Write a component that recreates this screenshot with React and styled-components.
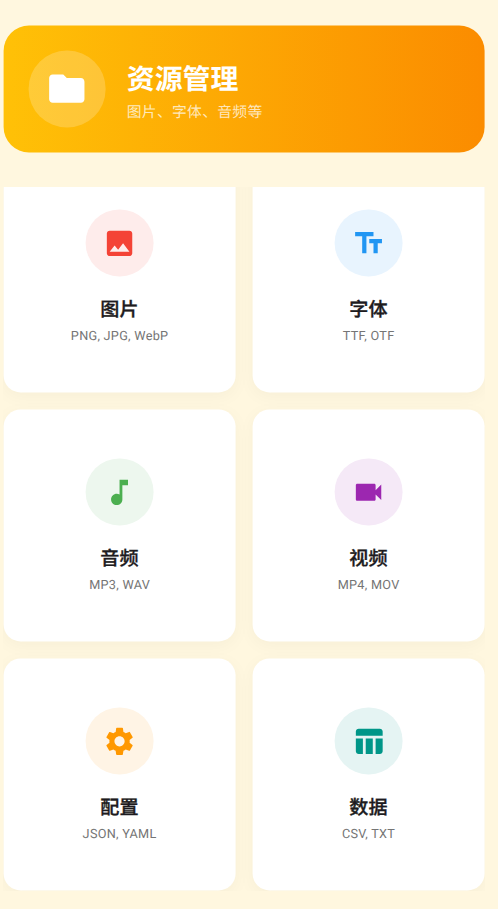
import React from 'react';
import styled, { createGlobalStyle } from 'styled-components';
import { MdFolder, MdImage, MdTextFields, MdMusicNote, MdVideocam, MdSettings, MdTableChart } from 'react-icons/md';

const GlobalStyle = createGlobalStyle`
  *, *::before, *::after { box-sizing: border-box; }
  body {
    margin: 0;
    background: #fff7df;
    font-family: Roboto, "Noto Sans CJK SC", sans-serif;
    text-rendering: geometricPrecision;
  }
`;

const Page = styled.main`
  height: 909px;
  padding: 26px 13px 0 4px;
  overflow: hidden;
  background: #fff7df;
`;

const Header = styled.header`
  display: flex;
  align-items: center;
  gap: 21.6px;
  height: 127px;
  padding: 0 25.4px;
  border-radius: 25.4px;
  background: linear-gradient(90deg, #ffc107, #fb8c00);
  transform: translate(-0.4px, -0.5px);
`;

const HeaderIcon = styled.div`
  display: grid;
  place-items: center;
  width: 76.2px;
  height: 76.2px;
  border-radius: 50%;
  background: rgba(255, 255, 255, 0.2);
  color: #fff;
  font-size: 42.4px;
  svg { display: block; }
`;

const HeaderText = styled.div`
  display: flex;
  flex-direction: column;
  gap: 5px;
  padding-top: 6px;
`;

const Title = styled.h1`
  margin: 0;
  font-size: 27.9px;
  line-height: 34px;
  font-weight: 700;
  color: #fff;
`;

const Subtitle = styled.p`
  margin: 0;
  font-size: 14.8px;
  line-height: 21px;
  letter-spacing: 0.28px;
  color: rgba(255, 255, 255, 0.74);
`;

const Viewport = styled.section`
  display: flex;
  flex-direction: column;
  justify-content: flex-end;
  height: 704px;
  margin: 34px 0 0 -1px;
  padding-left: 1px;
  overflow: hidden;
`;

const Grid = styled.div`
  flex: none;
  display: grid;
  grid-template-columns: 1fr 1fr;
  grid-auto-rows: 232px;
  gap: 17px;
  transform: translate(-0.4px, -0.6px);
`;

const Card = styled.article`
  display: flex;
  flex-direction: column;
  align-items: center;
  padding-top: 48.6px;
  border-radius: 17px;
  background: #fff;
  box-shadow: 0 4px 17px rgba(0, 0, 0, 0.035);
`;

const CardIcon = styled.div`
  display: grid;
  place-items: center;
  width: 67.8px;
  height: 67.8px;
  border-radius: 50%;
  background: ${({ $tint }) => $tint};
  color: ${({ $color }) => $color};
  font-size: 33.9px;
  svg { display: block; }
`;

const CardTitle = styled.h2`
  margin: 18.6px 0 0;
  font-size: 19.1px;
  line-height: 30px;
  letter-spacing: 0.15px;
  font-weight: 500;
  color: #1d1b20;
  -webkit-text-stroke: 0.35px #1d1b20;
`;

const CardFormats = styled.p`
  margin: 3px 0 0;
  font-size: 12.7px;
  line-height: 17px;
  letter-spacing: 0.28px;
  color: #757575;
`;

const categories = [
  { name: '图片', formats: 'PNG, JPG, WebP', Icon: MdImage, color: '#f44336', tint: '#feeceb' },
  { name: '字体', formats: 'TTF, OTF', Icon: MdTextFields, color: '#2196f3', tint: '#e8f4fe' },
  { name: '音频', formats: 'MP3, WAV', Icon: MdMusicNote, color: '#4caf50', tint: '#edf7ee' },
  { name: '视频', formats: 'MP4, MOV', Icon: MdVideocam, color: '#9c27b0', tint: '#f5e9f7' },
  { name: '配置', formats: 'JSON, YAML', Icon: MdSettings, color: '#ff9800', tint: '#fff4e5' },
  { name: '数据', formats: 'CSV, TXT', Icon: MdTableChart, color: '#009688', tint: '#e5f4f3' },
];

export default function App() {
  return (
    <>
      <GlobalStyle />
      <Page>
        <Header>
          <HeaderIcon><MdFolder /></HeaderIcon>
          <HeaderText>
            <Title>资源管理</Title>
            <Subtitle>图片、字体、音频等</Subtitle>
          </HeaderText>
        </Header>
        <Viewport>
          <Grid>
            {categories.map(({ name, formats, Icon, color, tint }) => (
              <Card key={name}>
                <CardIcon $color={color} $tint={tint}><Icon /></CardIcon>
                <CardTitle>{name}</CardTitle>
                <CardFormats>{formats}</CardFormats>
              </Card>
            ))}
          </Grid>
        </Viewport>
      </Page>
    </>
  );
}
